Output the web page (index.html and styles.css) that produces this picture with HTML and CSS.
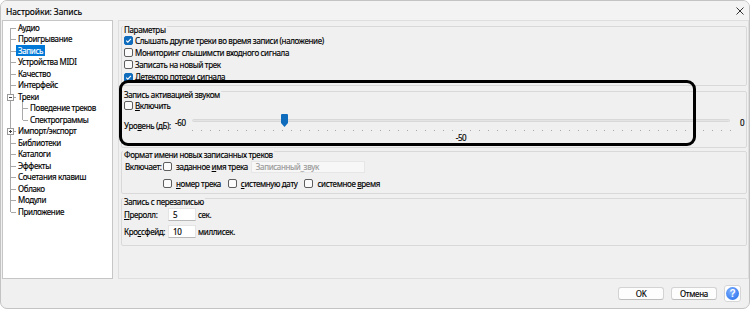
FILE: index.html
```html
<!DOCTYPE html>
<html lang="ru">
<head>
<meta charset="utf-8">
<title>Настройки: Запись</title>
<link rel="stylesheet" href="styles.css">
</head>
<body>
<div class="window">
  <div class="titlebar">
    <span class="title">Настройки: Запись</span>
    <svg class="close" width="8" height="8" viewBox="0 0 8 8"><path d="M0.5 0.5 L7.5 7.5 M7.5 0.5 L0.5 7.5" stroke="#333" stroke-width="1" fill="none"/></svg>
  </div>
  <div class="main">
    <ul class="tree">
      <li class="top first"><span class="lbl">Аудио</span></li>
      <li class="top"><span class="lbl">Проигрывание</span></li>
      <li class="top sel"><span class="lbl">Запись</span></li>
      <li class="top"><span class="lbl">Устройства MIDI</span></li>
      <li class="top"><span class="lbl">Качество</span></li>
      <li class="top"><span class="lbl">Интерфейс</span></li>
      <li class="top parent"><span class="exp minus"></span><span class="lbl">Треки</span></li>
      <li class="child"><span class="lbl">Поведение треков</span></li>
      <li class="child lastchild"><span class="lbl">Спектрограммы</span></li>
      <li class="top"><span class="exp plus"></span><span class="lbl">Импорт/экспорт</span></li>
      <li class="top"><span class="lbl">Библиотеки</span></li>
      <li class="top"><span class="lbl">Каталоги</span></li>
      <li class="top"><span class="lbl">Эффекты</span></li>
      <li class="top"><span class="lbl">Сочетания клавиш</span></li>
      <li class="top"><span class="lbl">Облако</span></li>
      <li class="top"><span class="lbl">Модули</span></li>
      <li class="top last"><span class="lbl">Приложение</span></li>
    </ul>
    <div class="pages">
      <section class="group g1">
        <div class="gtitle">Параметры</div>
        <div class="opt"><span class="cb on"><svg width="7" height="7" viewBox="0 0 7 7"><path d="M1.2 3.6 L2.8 5.1 L5.9 1.8" stroke="#fff" stroke-width="1.1" fill="none"/></svg></span><span>Слышать другие треки во время записи (наложение)</span></div>
        <div class="opt"><span class="cb"></span><span>Мониторинг слышимсти входного сигнала</span></div>
        <div class="opt"><span class="cb"></span><span>Записать на новый трек</span></div>
        <div class="opt"><span class="cb on"><svg width="7" height="7" viewBox="0 0 7 7"><path d="M1.2 3.6 L2.8 5.1 L5.9 1.8" stroke="#fff" stroke-width="1.1" fill="none"/></svg></span><span>Детектор потери сигнала</span></div>
      </section>
      <section class="group g2">
        <div class="gtitle">Запись активацией звуком</div>
        <div class="opt"><span class="cb"></span><span><u>В</u>ключить</span></div>
        <div class="slider-row">
          <span class="sl-label">Уро<u>в</u>ень (дБ):</span>
          <span class="sl-min">-60</span>
          <div class="slider">
            <div class="track"></div>
            <svg class="thumb" width="7" height="13" viewBox="0 0 7 13"><path d="M1 0 H6 Q7 0 7 1 V9 L3.5 13 L0 9 V1 Q0 0 1 0 Z" fill="#0f6cbd"/></svg>
            <div class="ticks"></div>
            <div class="sl-value">-50</div>
          </div>
          <span class="sl-max">0</span>
        </div>
      </section>
      <section class="group g3">
        <div class="gtitle">Формат имени новых записанных треков</div>
        <div class="fmt">
          <span class="inc">Включает:</span>
          <div class="frow r1">
            <span class="item"><span class="cb"></span><span>заданное <u>и</u>мя трека</span></span>
            <span class="field disabled">Записанный_звук</span>
          </div>
          <div class="frow r2">
            <span class="item"><span class="cb"></span><span><u>н</u>омер трека</span></span>
            <span class="item"><span class="cb"></span><span><u>с</u>истемную дату</span></span>
            <span class="item"><span class="cb"></span><span>системное <u>в</u>ремя</span></span>
          </div>
        </div>
      </section>
      <section class="group g4">
        <div class="gtitle">Запись с перезаписью</div>
        <div class="nrow">
          <span class="nlabel"><u>П</u>реролл:</span>
          <span class="field num">5</span>
          <span class="unit">сек.</span>
        </div>
        <div class="nrow second">
          <span class="nlabel">Кро<u>с</u>сфейд:</span>
          <span class="field num">10</span>
          <span class="unit">миллисек.</span>
        </div>
      </section>
    </div>
  </div>
  <div class="footer">
    <button class="btn">OK</button>
    <button class="btn">Отмена</button>
    <button class="help"><span class="qcircle">?</span></button>
  </div>
  <div class="annot"></div>
</div>
</body>
</html>
```

FILE: styles.css
```css
* { box-sizing: border-box; }
html, body { margin: 0; padding: 0; background: #ffffff; }
body {
  width: 750px;
  height: 310px;
  font-family: "Noto Sans", "Open Sans", sans-serif;
  font-size: 8px;
  letter-spacing: -0.35px;
  color: #000;
  -webkit-text-stroke: 0.15px currentColor;
  overflow: hidden;
}
u { text-decoration: underline; text-underline-offset: 1px; }

.window {
  position: relative;
  width: 750px;
  height: 309px;
  background: #f0f0f0;
  border: 1px solid #c3c3c3;
  border-radius: 7px;
  overflow: hidden;
}

.titlebar {
  height: 19px;
  display: flex;
  align-items: center;
  justify-content: space-between;
  padding: 1px 5px 0 5px;
  background: #f3f3f3;
}
.title { font-size: 8.5px; line-height: 11px; letter-spacing: -0.1px; }
.close { display: block; margin-top: -1px; }

.main {
  display: flex;
  height: 259px;
  padding-left: 1px;
  gap: 5px;
}

/* ---------- tree ---------- */
.tree {
  list-style: none;
  margin: 0;
  padding: 0;
  width: 111px;
  height: 259px;
  flex: none;
  background: #fff;
  border: 1px solid #c6c6c6;
}
.tree li {
  position: relative;
  height: 11.5px;
  line-height: 11.5px;
  padding-left: 13px;
  white-space: nowrap;
  background-repeat: no-repeat;
}
.tree li:first-child { margin-top: 0.5px; }
.tree li.top {
  background-image: linear-gradient(#a9a9a9, #a9a9a9), linear-gradient(#a9a9a9, #a9a9a9);
  background-position: 7px 0, 8px 6px;
  background-size: 1px 100%, 5px 1px;
}
.tree li.first { background-position: 7px 6px, 8px 6px; background-size: 1px 100%, 5px 1px; }
.tree li.last { background-position: 7px 0, 8px 6px; background-size: 1px 6px, 5px 1px; }
.tree li.parent {
  background-image: linear-gradient(#a9a9a9, #a9a9a9), linear-gradient(#a9a9a9, #a9a9a9), linear-gradient(#a9a9a9, #a9a9a9);
  background-position: 7px 0, 8px 6px, 19px 9px;
  background-size: 1px 100%, 5px 1px, 1px 3px;
}
.tree li.child {
  padding-left: 25px;
  background-image: linear-gradient(#a9a9a9, #a9a9a9), linear-gradient(#a9a9a9, #a9a9a9), linear-gradient(#a9a9a9, #a9a9a9);
  background-position: 7px 0, 19px 0, 20px 6px;
  background-size: 1px 100%, 1px 100%, 5px 1px;
}
.tree li.lastchild { background-size: 1px 100%, 1px 6px, 5px 1px; }
.tree .lbl {
  display: inline-block;
  height: 11px;
  line-height: 11px;
  padding: 0 2px;
  vertical-align: top;
  margin-top: 0.25px;
}
.tree li.sel .lbl { background: #0078d7; color: #fff; }
.exp {
  position: absolute;
  left: 4px;
  top: 3px;
  width: 7px;
  height: 7px;
  border: 1px solid #9a9a9a;
  background: #fff;
}
.exp::before {
  content: "";
  position: absolute;
  left: 1px;
  top: 2px;
  width: 3px;
  height: 1px;
  background: #444;
}
.exp.plus::after {
  content: "";
  position: absolute;
  left: 2px;
  top: 1px;
  width: 1px;
  height: 3px;
  background: #444;
}

/* ---------- pages ---------- */
.pages {
  flex: 1;
  height: 259px;
  border: 1px solid #dedede;
  padding: 0 1px 0 2px;
}
.group {
  border: 1px solid #d9d9d9;
  border-radius: 2px;
  padding: 0 2px;
}
.gtitle {
  display: table;
  margin: -3px 0 0 -1px;
  padding: 0 1px;
  height: 11px;
  line-height: 11px;
  background: #f0f0f0;
  position: relative;
}
.g1 { margin-top: 4.5px; padding-bottom: 1.5px; }
.g2 { margin-top: 5px; padding-bottom: 4px; }
.g3 { margin-top: 3px; padding-bottom: 4px; }
.g4 { margin-top: 3.5px; padding-bottom: 7px; }

.opt {
  display: flex;
  align-items: center;
  height: 12.2px;
  line-height: 12px;
  white-space: nowrap;
}
.cb {
  display: inline-flex;
  align-items: center;
  justify-content: center;
  flex: none;
  width: 9px;
  height: 9px;
  border: 1px solid #5e5e5e;
  border-radius: 2px;
  background: #fbfbfb;
  margin-right: 2px;
}
.cb.on { background: #0f6cbd; border-color: #0f6cbd; }
.cb svg { display: block; }

/* slider */
.slider-row {
  display: flex;
  align-items: flex-start;
  height: 31px;
}
.sl-label { width: 51px; flex: none; margin-top: 8.5px; line-height: 11px; white-space: nowrap; }
.sl-min { width: 17px; flex: none; margin-top: 5px; line-height: 11px; }
.slider { position: relative; width: 538px; flex: none; }
.track {
  margin-top: 7px;
  height: 3px;
  background: #e4e4e4;
  border: 1px solid #d8d8d8;
  border-radius: 2px;
}
.thumb { position: absolute; top: 2px; left: calc(16.667% - 1px); display: block; }
.ticks {
  margin-top: 8px;
  width: 539px;
  height: 1px;
  background: repeating-linear-gradient(to right, #a8a8a8 0 1px, transparent 1px 8.9667px);
}
.sl-value { margin-top: 1px; text-align: center; line-height: 11px; }
.sl-max { margin: 5px 0 0 10px; line-height: 11px; }

/* format group */
.fmt {
  display: grid;
  grid-template-columns: 39px max-content;
  grid-template-rows: 14px 12px;
  row-gap: 3.5px;
  align-items: center;
}
.inc { padding-left: 1px; white-space: nowrap; }
.r2 { grid-column: 2; grid-row: 2; }
.frow { display: flex; align-items: center; white-space: nowrap; }
.item { display: flex; align-items: center; margin-right: 7px; flex: none; }
.r1 .item { margin-right: 3px; }
.item .cb { margin-right: 4px; }
.field {
  display: inline-block;
  height: 12px;
  line-height: 10px;
  border: 1px solid #e2e2e2;
  background: #fff;
  padding: 0 4px;
}
.field.disabled {
  width: 114px;
  background: #f7f7f7;
  color: #9a9a9a;
  border-color: #e6e6e6;
}

/* overdub group */
.nrow { display: flex; align-items: center; height: 14px; margin-top: 1px; white-space: nowrap; }
.nrow.second { margin-top: 2.5px; }
.nlabel { width: 44px; flex: none; }
.field.num {
  width: 28px;
  height: 13px;
  line-height: 11px;
  border-color: #e4e4e4;
  border-bottom-color: #b8b8b8;
}
.unit { margin-left: 2px; }

/* footer */
.footer {
  display: flex;
  justify-content: flex-end;
  align-items: center;
  gap: 7px;
  height: 17px;
  margin-top: 6px;
  padding-right: 8px;
}
.btn {
  width: 46px;
  height: 13px;
  padding: 0;
  font-family: "Noto Sans", "Open Sans", sans-serif;
  font-size: 8px;
  letter-spacing: -0.3px;
  line-height: 11px;
  color: #000;
  -webkit-text-stroke: 0.15px currentColor;
  background: #fdfdfd;
  border: 1px solid #d3d3d3;
  border-bottom-color: #bdbdbd;
  border-radius: 3px;
}
.help {
  width: 17px;
  height: 17px;
  padding: 0;
  display: flex;
  align-items: center;
  justify-content: center;
  background: #fff;
  border: 1px solid #d6d6d6;
  border-radius: 3px;
}
.qcircle {
  width: 13px;
  height: 13px;
  border-radius: 50%;
  background: radial-gradient(circle at 40% 35%, #7fb0ff, #3a7ef0 70%);
  color: #fff;
  font-family: "Liberation Sans", sans-serif;
  font-weight: bold;
  font-size: 10px;
  letter-spacing: 0;
  line-height: 13px;
  text-align: center;
  -webkit-text-stroke: 0;
}

/* annotation overlay */
.annot {
  position: absolute;
  left: 118px;
  top: 79px;
  width: 577px;
  height: 66px;
  border: 3.5px solid #000;
  border-radius: 9px;
  pointer-events: none;
}
```
